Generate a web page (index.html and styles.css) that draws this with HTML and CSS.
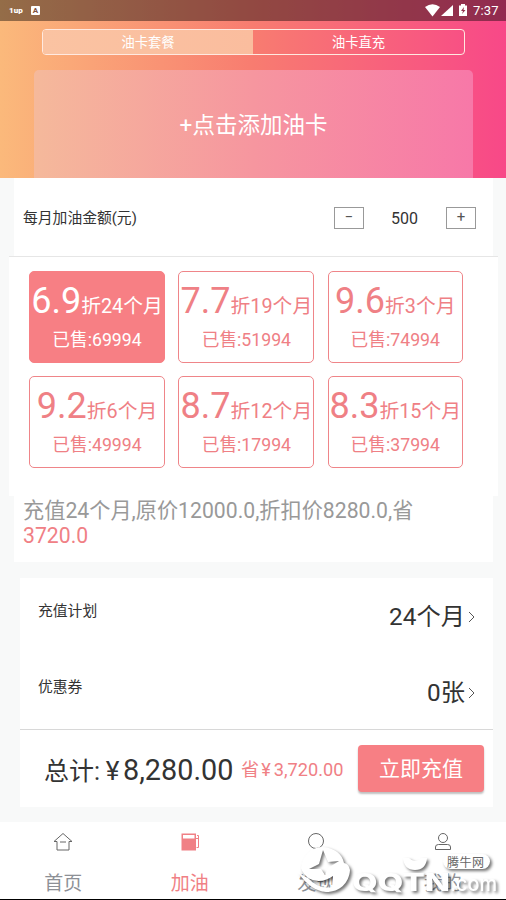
FILE: index.html
```html
<!DOCTYPE html>
<html lang="zh-CN">
<head>
<meta charset="utf-8">
<title>加油</title>
<link rel="stylesheet" href="styles.css">
</head>
<body>
<div class="app">
  <header class="hero">
    <div class="status">
      <span class="status-tag">1up</span>
      <span class="status-app">A</span>
      <svg class="status-icons" width="44" height="14" viewBox="0 0 44 14" fill="#fff">
        <path d="M0 3Q7.500-2.500 15 3L7.500 12.500Z"/>
        <path d="M28 1V12H16Z"/>
        <path fill-rule="evenodd" d="M34 1.500H36V0H40V1.500H42V12H34ZM39 3L36 7H38L37 10L40.500 6H38.500Z"/>
      </svg>
      <span class="clock">7:37</span>
    </div>
    <div class="segment">
      <div class="segment-item segment-on">油卡套餐</div>
      <div class="segment-item">油卡直充</div>
    </div>
    <div class="add-card">+点击添加油卡</div>
  </header>

  <section class="amount">
    <span class="label">每月加油金额(元)</span>
    <div class="stepper">
      <span class="step">−</span>
      <span class="amount-value">500</span>
      <span class="step">+</span>
    </div>
  </section>

  <section class="plans">
    <div class="plan plan-on"><div class="rate"><b>6.9</b>折24个月</div><div class="sold">已售:69994</div></div>
    <div class="plan"><div class="rate"><b>7.7</b>折19个月</div><div class="sold">已售:51994</div></div>
    <div class="plan"><div class="rate"><b>9.6</b>折3个月</div><div class="sold">已售:74994</div></div>
    <div class="plan"><div class="rate"><b>9.2</b>折6个月</div><div class="sold">已售:49994</div></div>
    <div class="plan"><div class="rate"><b>8.7</b>折12个月</div><div class="sold">已售:17994</div></div>
    <div class="plan"><div class="rate"><b>8.3</b>折15个月</div><div class="sold">已售:37994</div></div>
  </section>

  <section class="summary">充值24个月,原价12000.0,折扣价8280.0,省<br><span class="save">3720.0</span></section>

  <section class="order">
    <div class="row">
      <span class="label">充值计划</span>
      <span class="row-value">24个月<svg class="chevron" width="8" height="12" viewBox="0 0 8 12"><path d="M1 1L6 6L1 11"/></svg></span>
    </div>
    <div class="row">
      <span class="label">优惠券</span>
      <span class="row-value">0张<svg class="chevron" width="8" height="12" viewBox="0 0 8 12"><path d="M1 1L6 6L1 11"/></svg></span>
    </div>
    <div class="total">
      <span class="total-price"><span class="total-label">总计:</span><span class="yen">¥</span>8,280.00</span>
      <span class="total-save">省<span class="yen-small">¥</span>3,720.00</span>
      <span class="pay">立即充值</span>
    </div>
  </section>

  <nav class="tabs">
    <div class="tab">
      <svg width="20" height="20" viewBox="0 0 20 20" class="line"><path d="M1 9.500L10 1.500L19 9.500H16V18H4V9.500ZM7 10H13"/></svg>
      <span>首页</span>
    </div>
    <div class="tab tab-on">
      <svg width="20" height="20" viewBox="0 0 20 20"><path fill="#f08085" fill-rule="evenodd" d="M1.500 1.500H16V18.500H1.500ZM3 3V6.500H14.500V3Z"/><path fill="none" stroke="#f08085" d="M16 6.500H18M17 3.500H18.500V15.500H16.500"/></svg>
      <span>加油</span>
    </div>
    <div class="tab">
      <svg width="20" height="20" viewBox="0 0 20 20" class="line"><circle cx="10" cy="9" r="7.500"/></svg>
      <span>发现</span>
    </div>
    <div class="tab">
      <svg width="20" height="20" viewBox="0 0 20 20" class="line"><circle cx="10" cy="6" r="4.500"/><path d="M2.500 17.500V15Q2.500 12.500 5.500 12.500H14.500Q17.500 12.500 17.500 15V17.500Z"/></svg>
      <span>我的</span>
    </div>
  </nav>

  <svg class="mark" width="216" height="77" viewBox="290 822 216 77">
    <g class="mark-shape">
      <path fill-rule="evenodd" d="M301 868C303 855 311 847 323 847C335 848 342 854 344 863Q349 864 350 870C349 883 340 892 326 892C316 891 306 885 298 872Q304 877 310 879Q303 875 301 868ZM309 869L319 864L323 850L328 862L339 861L328 868L325 875L321 869ZM308 878Q320 885 333 876L332 887Q319 890 308 878Z"/>
      <path d="M403 858Q404 870 415 870Q426 870 427 858H421Q415 864 409 858Z"/>
      <rect x="443" y="854" width="47" height="15" rx="7.500"/>
      <text class="mark-word" x="352" y="891" textLength="98" lengthAdjust="spacingAndGlyphs">QQTN</text>
      <text class="mark-com" x="450" y="891" textLength="47" lengthAdjust="spacingAndGlyphs">.com</text>
    </g>
    <text class="mark-name" x="447" y="866.500" textLength="37">腾牛网</text>
  </svg>
</div>
</body>
</html>
```
FILE: styles.css
```css
* { box-sizing: border-box; }
body { margin: 0; font-family: Roboto, "Noto Sans CJK SC", sans-serif; color: #333; background: #f8f9f9; }
.app { position: relative; width: 506px; height: 900px; overflow: hidden; display: flex; flex-direction: column; border-bottom: 1px solid #000; }
.hero { height: 178px; flex: none; background: linear-gradient(90deg, #fbb97b 0%, #f87c70 50%, #f84888 100%); color: #fff; }
.status { height: 21px; background: rgba(0, 0, 0, .41); display: flex; align-items: center; padding: 0 7px 0 9px; }
.status-tag { font-size: 8px; font-weight: 900; width: 22px; line-height: 20px; }
.status-app { width: 9px; height: 9px; background: #fff; color: #80503f; font-size: 8px; font-weight: 700; line-height: 9px; text-align: center; border-radius: 1px; }
.status-icons { margin-left: auto; }
.clock { font-size: 13px; line-height: 21px; width: 26px; margin-left: 4px; letter-spacing: .2px; }
.segment { margin: 8px 41px 0 42px; height: 26px; border: 1px solid #ffe9e0; border-radius: 4px; display: flex; overflow: hidden; }
.segment-item { flex: 1; text-align: center; font-size: 13.300px; line-height: 25px; }
.segment-on { flex: 0 0 210px; background: linear-gradient(90deg, #fac3a2, #fabd9e); }
.add-card { margin: 15px 33px 0 34px; height: 108px; border-radius: 5px 5px 0 0; background: linear-gradient(90deg, #f5b99b, #f6969f 50%, #f778a8); text-align: center; font-size: 22.500px; line-height: 111px; }
.amount { flex: none; margin: 0 13px 0 14px; height: 78px; background: #fff; display: flex; align-items: center; justify-content: space-between; padding: 2px 17px 0 9px; }
.label { font-size: 14.800px; line-height: 22px; }
.stepper { display: flex; align-items: center; }
.step { width: 30px; height: 22px; border: 1px solid #999; font-size: 15px; line-height: 19px; text-align: center; color: #555; }
.amount-value { width: 82px; text-align: center; font-size: 16px; padding-right: 1px; }
.plans { flex: none; margin: 0 8px 0 9px; height: 240px; border-top: 1px solid #e6e6e6; background: #fff; padding: 14px 0 0 20px; display: grid; grid-template-columns: 136px 136px 135px; grid-auto-rows: 92px; column-gap: 13.400px; row-gap: 13px; align-content: start; }
.plan { border: 1px solid #ef8589; border-radius: 5px; color: #ef8085; text-align: center; white-space: nowrap; }
.plan-on { background: #f77f84; border-color: #f77f84; color: #fff; }
.rate { height: 57px; display: flex; justify-content: center; align-items: baseline; line-height: 59px; font-size: 19.800px; }
.rate b { font-size: 36px; font-weight: 400; }
.sold { font-size: 17.700px; line-height: 22px; }
.summary { flex: none; margin: 0 13px 0 14px; height: 66px; background: #fff; padding: 2px 9px; font-size: 21.200px; line-height: 25px; color: #999; white-space: nowrap; }
.save { color: #f08085; }
.order { flex: none; margin: 16px 13px 0 20px; height: 229px; background: #fff; }
.row { height: 75.500px; display: flex; justify-content: space-between; padding: 22px 17px 0 18px; }
.row-value { display: flex; align-items: center; font-size: 24.300px; line-height: 34px; height: 34px; }
.chevron { margin-left: 3px; fill: none; stroke: #555; stroke-width: 1; }
.total { height: 78px; border-top: 1px solid #d8d8d8; display: flex; align-items: center; padding: 0 9px 0 24px; white-space: nowrap; }
.total-price { display: flex; align-items: baseline; font-size: 28.800px; line-height: 38px; width: 197px; margin-top: 4px; }
.total-label { font-size: 25px; width: 58px; }
.yen { font-size: 26px; width: 21px; text-align: center; }
.total-save { font-size: 18.200px; color: #f08085; margin-top: -2px; }
.yen-small { margin: 0 3px 0 2px; }
.pay { margin-left: auto; width: 126px; height: 47px; background: #f77f84; color: #fff; border-radius: 4px; text-align: center; font-size: 21px; line-height: 49px; box-shadow: 0 2px 2px rgba(0, 0, 0, .25); }
.tabs { margin-top: 15px; flex: 1; background: #fff; display: flex; }
.tab { flex: 1; display: flex; flex-direction: column; align-items: center; padding-top: 10px; font-size: 19px; line-height: 28px; color: #8d9096; }
.tab span { margin-top: 18px; }
.tab-on { color: #f08085; }
.line { fill: none; stroke: #666; stroke-width: 1; }
.mark { position: absolute; left: 290px; top: 822px; }
.mark-shape { fill: #fff; filter: drop-shadow(2px 2px 1.500px rgba(0, 0, 0, .55)); }
.mark-word { font: 800 24px Inter, sans-serif; }
.mark-com { font: 500 21px Inter, sans-serif; }
.mark-name { font: 12px "Noto Sans CJK SC", sans-serif; fill: #666; }
```
